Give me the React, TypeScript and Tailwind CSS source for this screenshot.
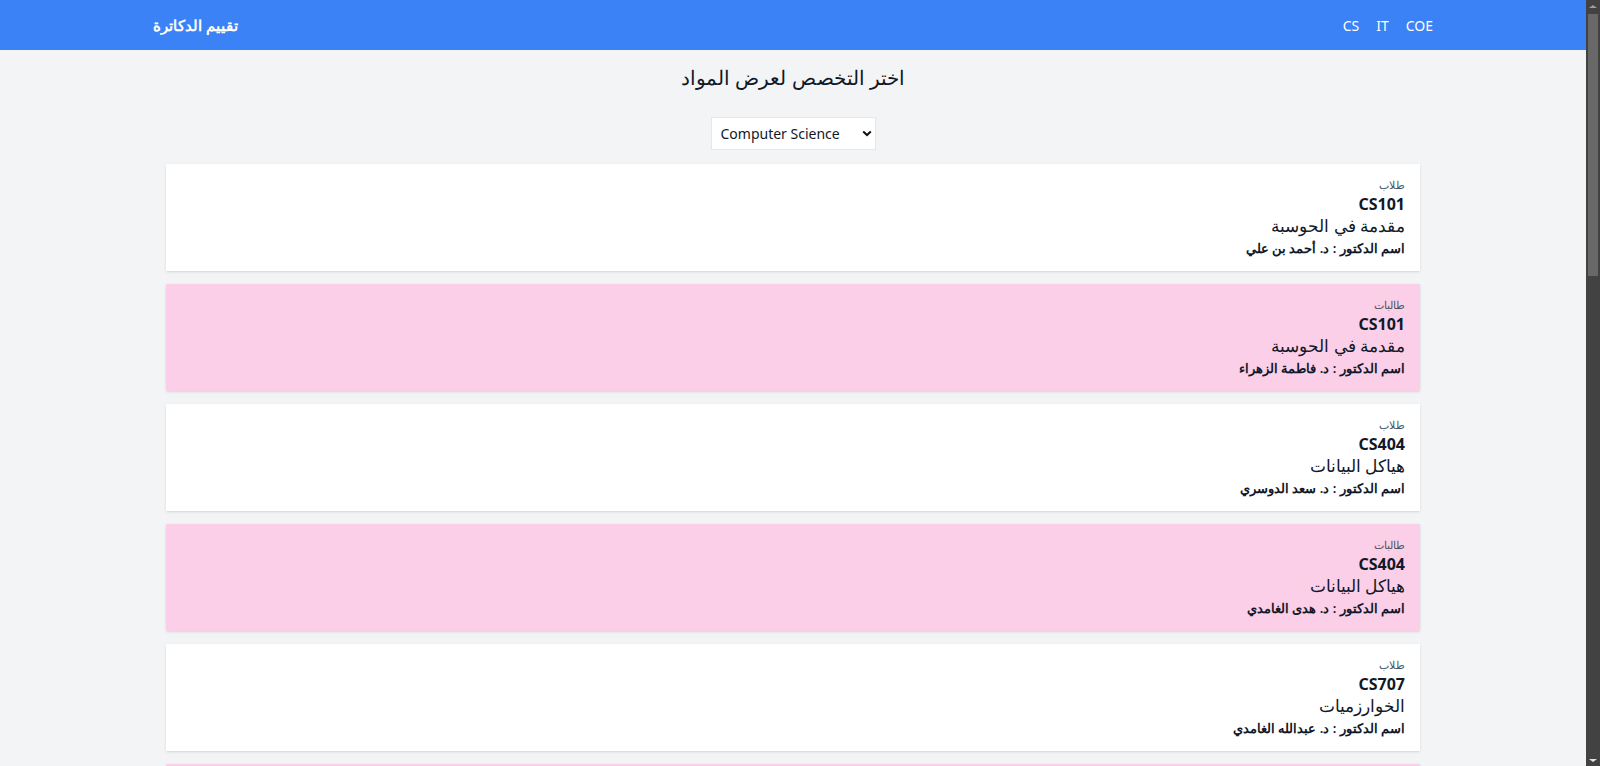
import { useState } from "react";

type Course = {
  gender: "طلاب" | "طالبات";
  code: string;
  name: string;
  doctor: string;
};

const courses: Course[] = [
  { gender: "طلاب", code: "CS101", name: "مقدمة في الحوسبة", doctor: "د. أحمد بن علي" },
  { gender: "طالبات", code: "CS101", name: "مقدمة في الحوسبة", doctor: "د. فاطمة الزهراء" },
  { gender: "طلاب", code: "CS404", name: "هياكل البيانات", doctor: "د. سعد الدوسري" },
  { gender: "طالبات", code: "CS404", name: "هياكل البيانات", doctor: "د. هدى الغامدي" },
  { gender: "طلاب", code: "CS707", name: "الخوارزميات", doctor: "د. عبدالله الغامدي" },
  { gender: "طالبات", code: "CS707", name: "الخوارزميات", doctor: "د. نورة القحطاني" },
];

function CourseCard({ course }: { course: Course }) {
  const female = course.gender === "طالبات";
  return (
    <div
      dir="rtl"
      className={
        female
          ? "h-[107px] shrink-0 bg-[#fbcfe8] py-3 pl-4 pr-[15px] text-right shadow"
          : "h-[107px] shrink-0 bg-white py-3 pl-4 pr-[15px] text-right shadow"
      }
    >
      <p className="text-[11px] leading-[18px] text-[#4b5563]">{course.gender}</p>
      <h3 className="text-[16px] font-bold leading-[20px] text-[#111827]">{course.code}</h3>
      <p className="text-[17px] leading-[24px] text-[#111827]">{course.name}</p>
      <p className="text-[13px] font-semibold leading-[20px] text-[#111827]">
        اسم الدكتور : {course.doctor}
      </p>
    </div>
  );
}

function FakeScrollbar() {
  return (
    <div className="flex h-full w-[14px] shrink-0 flex-col items-center bg-[#424242]">
      <div className="flex h-[12px] items-center justify-center">
        <div className="h-0 w-0 border-x-[4px] border-b-[3px] border-x-transparent border-b-[#9e9e9e]" />
      </div>
      <div className="mt-[2px] h-[262px] w-[10px] bg-[#686868]" />
      <div className="flex-1" />
      <div className="flex h-[12px] items-center justify-center">
        <div className="h-0 w-0 border-x-[4px] border-t-[3px] border-x-transparent border-t-[#e5e5e5]" />
      </div>
    </div>
  );
}

export default function App() {
  const [major, setMajor] = useState("CS");

  return (
    <div
      className="flex h-[766px] w-full overflow-hidden bg-[#f3f4f6] text-[#111827]"
      style={{ fontFamily: '"Noto Sans", sans-serif' }}
    >
      <div className="min-w-0 flex-1 overflow-hidden">
        <header className="h-[50px] bg-[#3b82f6]">
          <div className="mx-auto flex h-full max-w-[1280px] items-center justify-between">
            <h1 className="text-[15px] font-bold text-white">تقييم الدكاترة</h1>
            <nav className="flex gap-[17px] text-[14px] text-white">
              <a href="#">CS</a>
              <a href="#">IT</a>
              <a href="#">COE</a>
            </nav>
          </div>
        </header>

        <main className="mx-auto max-w-[1254px] pt-[12px]">
          <h2 className="text-center text-[20px] font-medium leading-8">اختر التخصص لعرض المواد</h2>

          <div className="mt-[23px] flex justify-center">
            <div className="relative">
              <select
                value={major}
                onChange={(e) => setMajor(e.target.value)}
                className="h-[33px] w-[165px] appearance-none border border-[#e5e7eb] bg-white pl-[9px] text-[14px] text-[#111827] outline-none"
              >
                <option value="CS">Computer Science</option>
                <option value="IT">Information Technology</option>
                <option value="COE">Computer Engineering</option>
              </select>
              <svg
                className="pointer-events-none absolute right-[4px] top-[13px]"
                width="10"
                height="7"
                viewBox="0 0 10 7"
              >
                <path d="M1.2 1.4 L5 5 L8.8 1.4" fill="none" stroke="#111" strokeWidth="2" />
              </svg>
            </div>
          </div>

          <div className="mt-[14px] flex flex-col gap-[13px]">
            {courses.map((c, i) => (
              <CourseCard key={i} course={c} />
            ))}
          </div>
        </main>
      </div>
      <FakeScrollbar />
    </div>
  );
}
